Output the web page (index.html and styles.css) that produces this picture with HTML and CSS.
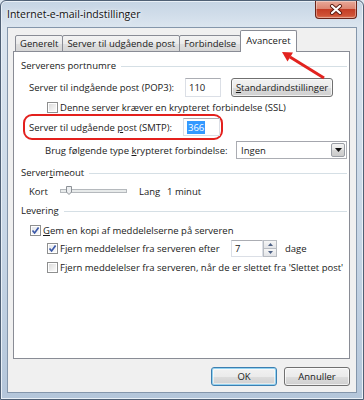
FILE: index.html
```html
<!DOCTYPE html>
<html lang="da">
<head>
  <meta charset="UTF-8" />
  <meta name="viewport" content="width=device-width, initial-scale=1.0" />
  <title>Internet-e-mail-indstillinger</title>
  <link rel="stylesheet" href="styles.css">
</head>
<body>
  <div class="window">
    <div class="titlebar">
      <span class="title">Internet-e-mail-indstillinger</span>
      <button class="close-btn" type="button" aria-label="Luk">
        <svg width="14" height="11" viewBox="0 0 14 11">
          <path d="M3 2 L11 9 M11 2 L3 9" stroke="#5a1a10" stroke-width="4" stroke-linecap="round" />
          <path d="M3 2 L11 9 M11 2 L3 9" stroke="#fff" stroke-width="2.2" stroke-linecap="round" />
        </svg>
      </button>
    </div>

    <div class="client">
      <div class="tabs">
        <span class="tab">Generelt</span>
        <span class="tab">Server til udgående post</span>
        <span class="tab">Forbindelse</span>
        <span class="tab active">Avanceret</span>
      </div>

      <div class="panel">
        <div class="group-title"><span>Serverens portnumre</span></div>
        <div class="row row-pop">
          <span class="lbl lbl-pop">Server til indgående post (POP3):</span>
          <span class="textbox tb-pop">110</span>
          <button class="btn btn-std" type="button"><u>S</u>tandardindstillinger</button>
        </div>
        <div class="row check row-ssl">
          <span class="cb"></span>
          <span>Denne server kræver en krypteret forbindelse (SSL)</span>
        </div>
        <div class="row row-smtp">
          <span class="lbl lbl-smtp">Server til udgående <u>p</u>ost (SMTP):</span>
          <span class="textbox tb-smtp"><span class="sel">366</span></span>
        </div>
        <div class="row row-enc">
          <span class="lbl lbl-enc">Brug følgende type <u>k</u>rypteret forbindelse:</span>
          <span class="combo">
            <span class="combo-text">Ingen</span>
            <span class="combo-btn">
              <svg width="7" height="4" viewBox="0 0 7 4"><path d="M0 0 H7 L3.5 4 Z" fill="#111" /></svg>
            </span>
          </span>
        </div>

        <div class="group-title g-timeout"><span>Server<u>t</u>imeout</span></div>
        <div class="row row-timeout">
          <span class="t-kort">Kort</span>
          <svg class="slider" width="67" height="10" viewBox="0 0 67 10">
            <rect x="0.5" y="3.5" width="66" height="3" fill="#e7eaea" stroke="#b5b9bd" />
            <path d="M6.5 0.5 H11.5 V6 L9 8.5 L6.5 6 Z" fill="#eceef0" stroke="#8c9196" />
          </svg>
          <span class="t-lang">Lang</span>
          <span>1 minut</span>
        </div>

        <div class="group-title g-levering"><span>Levering</span></div>
        <div class="row check row-keep">
          <span class="cb checked">
            <svg width="9" height="9" viewBox="0 0 9 9"><path d="M1.5 4.5 L3.6 7 L7.6 1.6" fill="none" stroke="#3b58a8" stroke-width="1.7" /></svg>
          </span>
          <span><u>G</u>em en kopi af meddelelserne på serveren</span>
        </div>
        <div class="row check row-remove">
          <span class="cb checked">
            <svg width="9" height="9" viewBox="0 0 9 9"><path d="M1.5 4.5 L3.6 7 L7.6 1.6" fill="none" stroke="#3b58a8" stroke-width="1.7" /></svg>
          </span>
          <span class="lbl-remove">F<u>j</u>ern meddelelser fra serveren efter</span>
          <span class="spin">
            <span class="textbox tb-days">7</span>
            <span class="spin-btns">
              <span class="spin-btn"><svg width="5" height="3" viewBox="0 0 5 3"><path d="M0 3 H5 L2.5 0 Z" fill="#4d6185" /></svg></span>
              <span class="spin-btn"><svg width="5" height="3" viewBox="0 0 5 3"><path d="M0 0 H5 L2.5 3 Z" fill="#4d6185" /></svg></span>
            </span>
          </span>
          <span class="t-dage">dage</span>
        </div>
        <div class="row check row-deleted">
          <span class="cb"></span>
          <span>F<u>j</u>ern meddelelser fra serveren, når de er slettet fra 'Slettet post'</span>
        </div>
      </div>

      <div class="footer">
        <button class="btn btn-ok" type="button">OK</button>
        <button class="btn" type="button">Annuller</button>
      </div>
    </div>

    <!-- red annotation arrow pointing at the tab -->
    <svg class="arrow" width="364" height="400" viewBox="0 0 364 400">
      <line x1="324" y1="78" x2="290" y2="57" stroke="#e2231f" stroke-width="3" />
      <path d="M282 52 L293 52.5 L287.5 61.5 Z" fill="#e2231f" />
    </svg>
  </div>
</body>
</html>
```

FILE: styles.css
```css
* { box-sizing: border-box; margin: 0; padding: 0; }
body {
  width: 364px;
  height: 400px;
  overflow: hidden;
  font-family: 'Open Sans', 'Noto Sans', sans-serif;
  font-size: 9.5px;
  color: #1a1a1a;
  background: #dce6f0;
}
u { text-decoration: underline; text-underline-offset: 1px; }

.window {
  position: relative;
  width: 364px;
  height: 400px;
  display: flex;
  flex-direction: column;
  padding: 0 6px 6px;
  border: 1px solid #4f6075;
  border-radius: 6px 6px 0 0;
  background: linear-gradient(to bottom, #c5d4e4 0%, #dbe5ef 26px, #c7d6e6 60%, #b4c6da 100%);
  box-shadow: inset 0 0 0 1px #e9f0f7;
}

/* title bar */
.titlebar {
  height: 26px;
  display: flex;
  align-items: flex-start;
}
.title {
  padding-top: 7px;
  font-size: 10.5px;
  line-height: 13px;
  color: #111;
  text-shadow: 0 0 6px #fff, 0 0 3px #fff;
}
.close-btn {
  margin-left: auto;
  width: 42px;
  height: 18px;
  display: flex;
  align-items: center;
  justify-content: center;
  border: 1px solid #6a2419;
  border-top: none;
  border-radius: 0 0 4px 4px;
  background: linear-gradient(to bottom, #e8a898 0%, #dc8672 45%, #c43d25 50%, #cf5236 85%, #dc7a5c 100%);
  box-shadow: inset 0 0 0 1px rgba(255,255,255,0.35);
}

/* client area */
.client {
  flex: 1;
  display: flex;
  flex-direction: column;
  padding: 2px 6px 0 5px;
  background: #f0f0f0;
  border: 1px solid #8496ab;
}

.tabs {
  position: relative;
  z-index: 1;
  height: 22px;
  margin-bottom: -1px;
  padding-left: 2px;
  display: flex;
  align-items: flex-end;
}
.tab {
  height: 17px;
  padding: 0 4px;
  line-height: 15px;
  border: 1px solid #898c95;
  border-radius: 2px 2px 0 0;
  background: linear-gradient(to bottom, #f3f3f3 0%, #ebebeb 50%, #dfdfdf 51%, #d6d6d6 100%);
  white-space: nowrap;
}
.tab + .tab { margin-left: -1px; }
.tab.active {
  height: 22px;
  margin: 0 -2px 0 -1px;
  padding: 0 5px;
  line-height: 19px;
  border-bottom: none;
  background: #fff;
}

.panel {
  flex: 1;
  padding: 8px 2px 0 7px;
  background: #fff;
  border: 1px solid #898c95;
}

.group-title {
  height: 12px;
  display: flex;
  align-items: center;
  line-height: 12px;
}
.group-title::after {
  content: '';
  flex: 1;
  margin-left: 5px;
  border-top: 1px solid #d5dfe5;
}
.g-timeout { margin-top: 8px; }
.g-levering { margin-top: 6px; }

.row {
  display: flex;
  align-items: center;
  white-space: nowrap;
}
.lbl { flex-shrink: 0; }

.textbox {
  display: flex;
  align-items: center;
  padding-left: 3px;
  background: #fff;
  border: 1px solid #dbdfe6;
  border-top-color: #abadb3;
}

.btn {
  font: inherit;
  color: #1a1a1a;
  height: 19px;
  border: 1px solid #707070;
  border-radius: 3px;
  background: linear-gradient(to bottom, #f2f2f2 0%, #ebebeb 50%, #dddddd 51%, #cfcfcf 100%);
  box-shadow: inset 0 0 0 1px rgba(255,255,255,0.7);
}

/* checkboxes */
.cb {
  width: 11px;
  height: 11px;
  flex-shrink: 0;
  margin-right: 2px;
  display: flex;
  align-items: center;
  justify-content: center;
  border: 1px solid #8e8f8f;
  background: linear-gradient(135deg, #d8d8d8 0%, #f4f4f4 70%, #fff 100%);
  box-shadow: inset 0 0 0 1px #fff;
}
.cb.checked { background: linear-gradient(135deg, #e4e6ea 0%, #fafafa 100%); }

/* Serverens portnumre */
.row-pop {
  height: 19px;
  margin-top: 6px;
  padding-left: 8px;
}
.lbl-pop { width: 156px; }
.tb-pop { width: 36px; height: 19px; }
.btn-std { width: 102px; margin-left: 10px; }

.row-ssl {
  height: 14px;
  margin-top: 3px;
  padding-left: 26px;
}

.row-smtp {
  width: 200px;
  height: 26px;
  margin-left: 2px;
  padding-left: 4px;
  border: 2px solid #e3201d;
  border-radius: 9px;
}
.lbl-smtp { width: 154px; }
.tb-smtp { width: 37px; height: 18px; }
.sel {
  padding: 0 1px;
  line-height: 13px;
  background: #3399ff;
  color: #fff;
}

.row-enc {
  height: 18px;
  margin-top: 1px;
  padding-left: 24px;
}
.lbl-enc { width: 191px; }
.combo {
  width: 111px;
  height: 18px;
  display: flex;
  align-items: center;
  justify-content: space-between;
  padding: 0 1px 0 4px;
  background: #fff;
  border: 1px solid #abadb3;
  border-top-color: #a4a6ad;
}
.combo-btn {
  width: 14px;
  height: 14px;
  display: flex;
  align-items: center;
  justify-content: center;
  border: 1px solid #9a9ea5;
  border-radius: 2px;
  background: linear-gradient(to bottom, #f4f4f4 0%, #e4e4e4 50%, #d6d6d6 51%, #cbcbcb 100%);
}

/* Servertimeout */
.row-timeout {
  height: 16px;
  margin-top: 4px;
  padding-left: 8px;
}
.t-kort { width: 31px; }
.slider { margin-right: 12px; }
.t-lang { width: 28px; }

/* Levering */
.row-keep {
  height: 14px;
  margin-top: 6px;
  padding-left: 9px;
}
.row-remove {
  height: 18px;
  margin-top: 2px;
  padding-left: 26px;
}
.lbl-remove { width: 171px; }
.spin {
  display: flex;
  height: 17px;
}
.tb-days { width: 32px; height: 17px; }
.spin-btns {
  width: 14px;
  display: flex;
  flex-direction: column;
}
.spin-btn {
  flex: 1;
  display: flex;
  align-items: center;
  justify-content: center;
  border: 1px solid #b8bcc2;
  background: linear-gradient(to bottom, #f6f6f6, #e2e4e7);
}
.spin-btn + .spin-btn { border-top: none; }
.t-dage { margin-left: 8px; }

.row-deleted {
  height: 14px;
  margin-top: 3px;
  padding-left: 26px;
}

/* dialog buttons */
.footer {
  height: 33px;
  padding-top: 8px;
  display: flex;
  justify-content: flex-end;
  align-items: flex-start;
  gap: 7px;
}
.footer .btn { width: 66px; }
.btn-ok {
  border-color: #3c7fb1;
  box-shadow: inset 0 0 0 1px #93d2f0, inset 0 0 0 2px rgba(255,255,255,0.5);
}

.arrow {
  position: absolute;
  top: -1px;
  left: -1px;
  pointer-events: none;
  z-index: 2;
}
```
